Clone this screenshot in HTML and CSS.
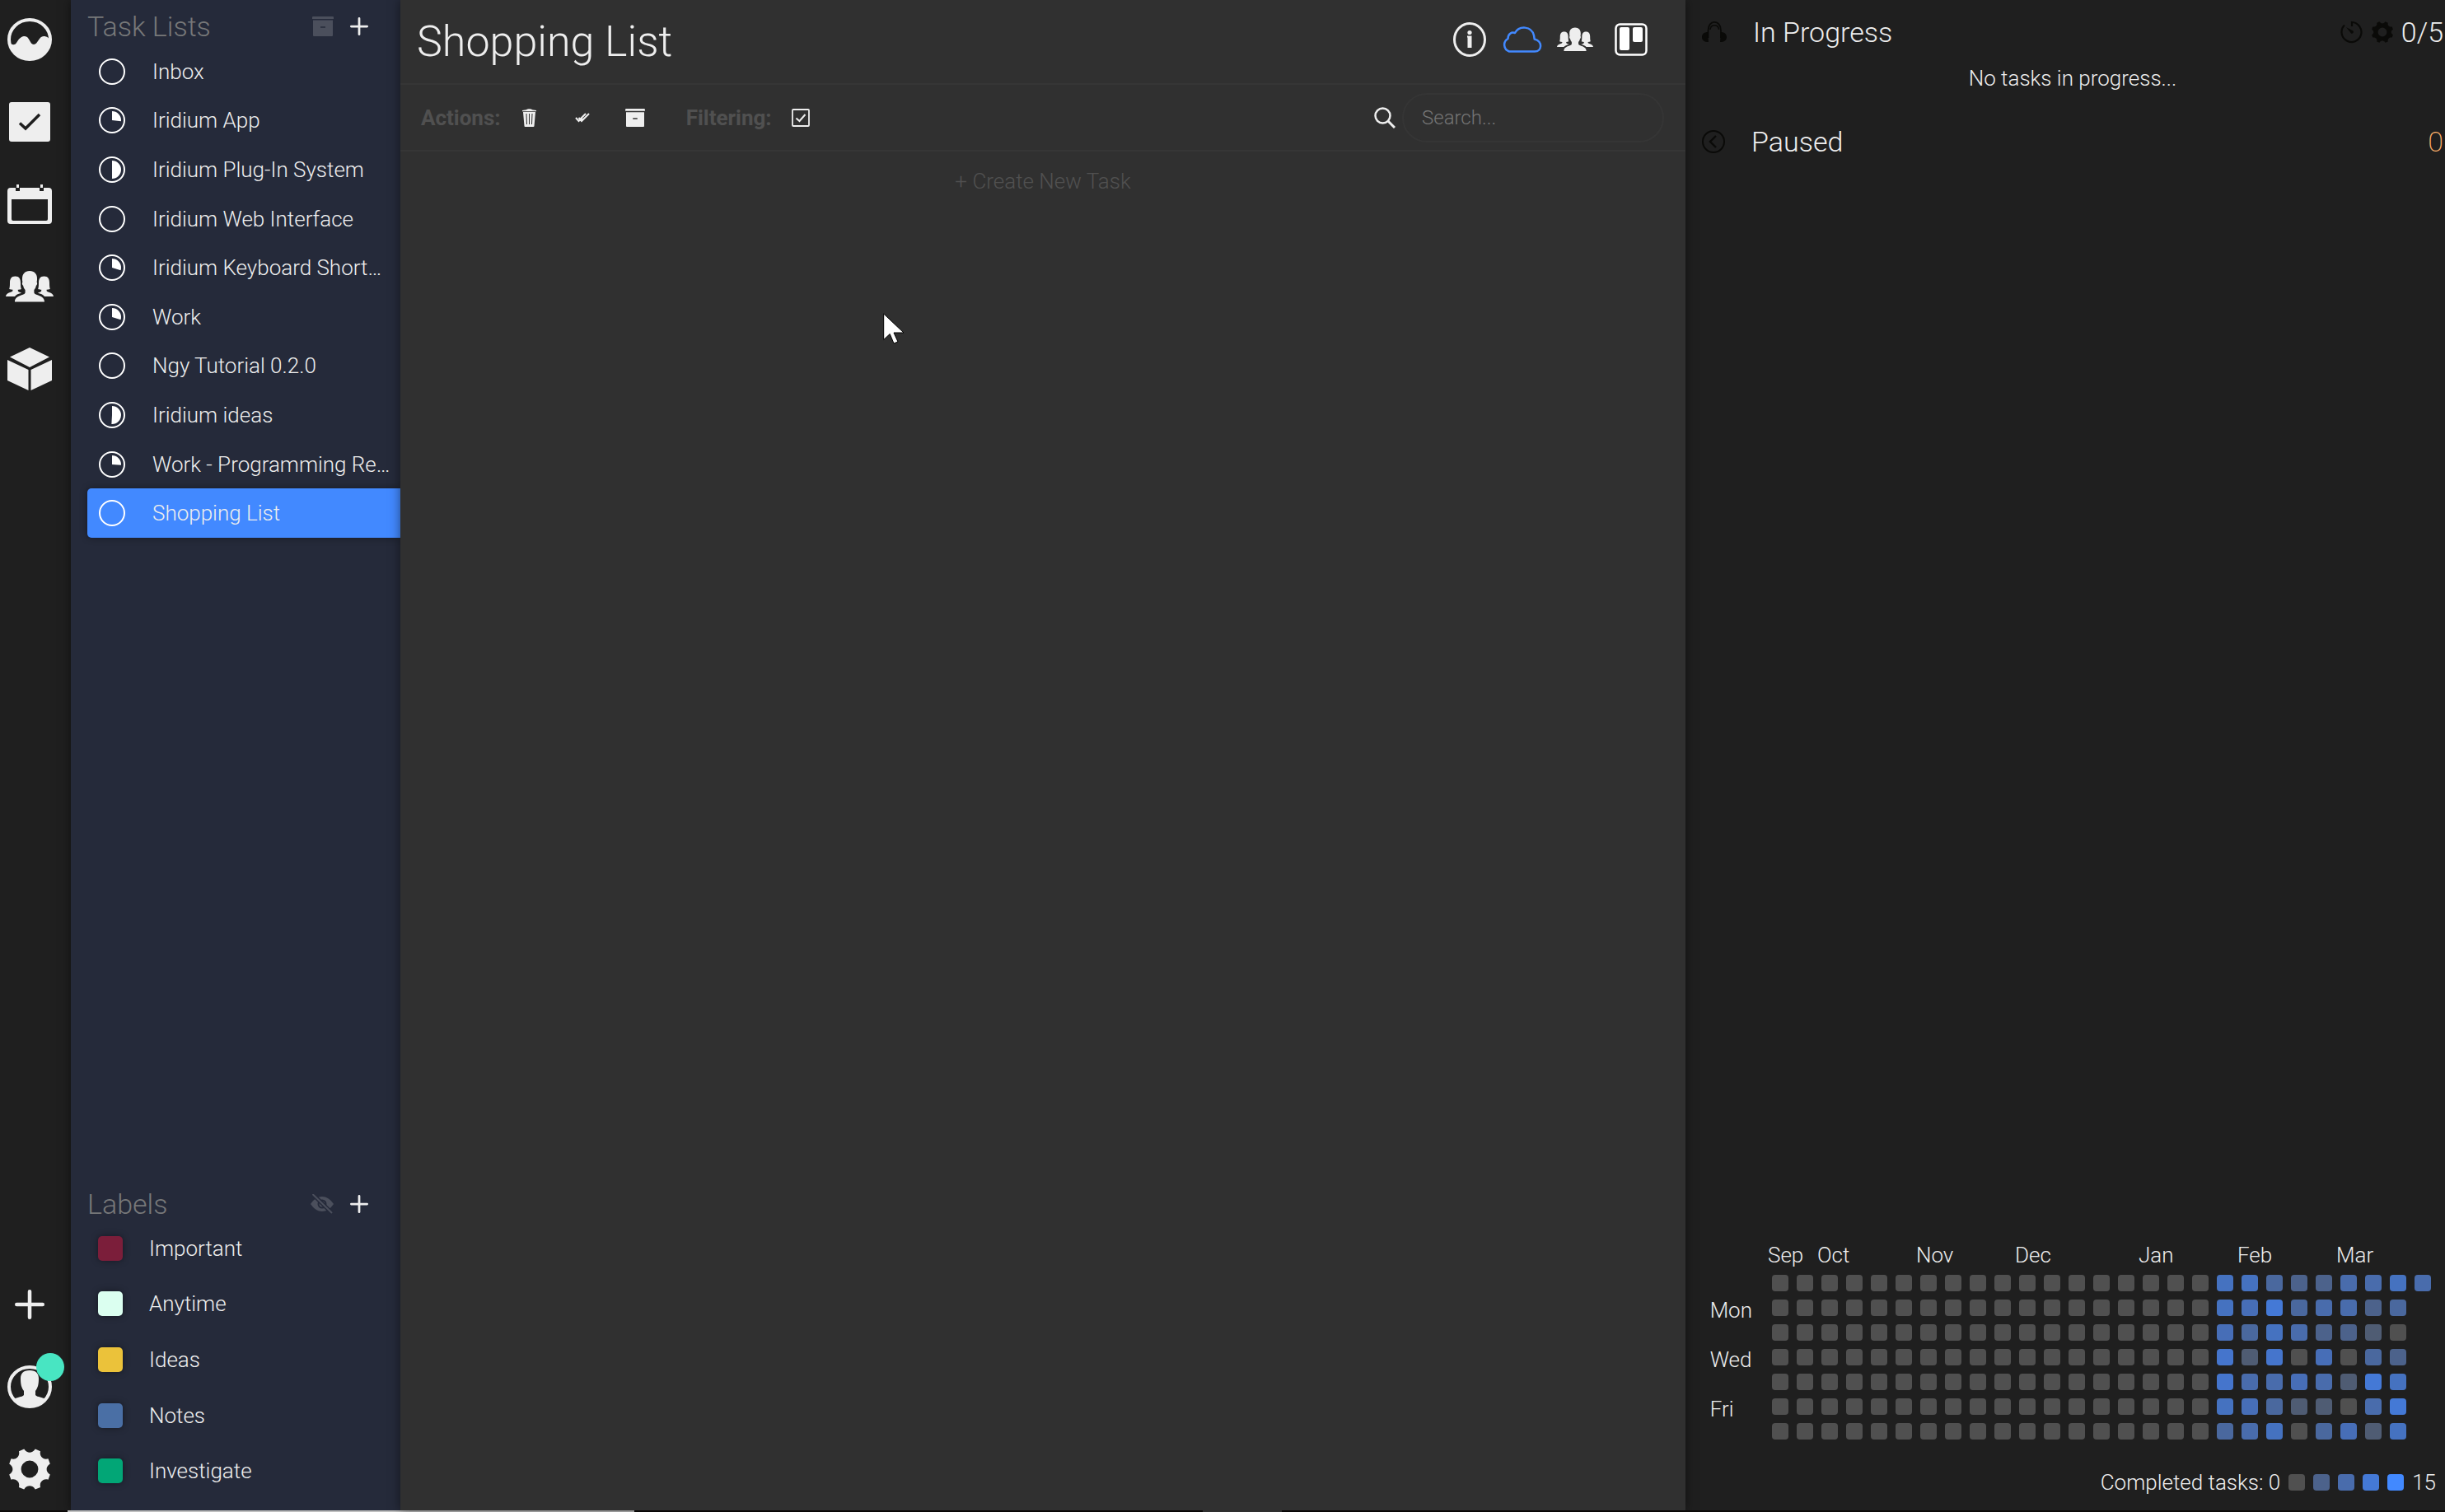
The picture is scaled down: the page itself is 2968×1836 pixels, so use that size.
FILE: index.html
```html
<!DOCTYPE html>
<html lang="en">
<head>
<meta charset="utf-8">
<meta name="viewport" content="width=device-width, initial-scale=1">
<title>Shopping List</title>
<link rel="stylesheet" href="styles.css">
</head>
<body>
<svg class="sprite" aria-hidden="true">
  <symbol id="i-people" viewBox="0 0 58 38">
    <path d="M29 0c6 0 9 4 9 9 0 2 0 3-.4 4.400c1 1 .6 3.600-.8 4.600-.4 2.600-1.400 3.800-2.400 5v3.400c1 3.600 12.600 2.600 12.600 11.100H11c0-8.500 11.600-7.500 12.600-11.100V23c-1-1.200-2-2.400-2.400-5-1.400-1-1.800-3.600-.8-4.600C20 12 20 11 20 9c0-5 3-9 9-9z"/>
    <path d="M11.500 6.500c5 0 6.500 3.500 6.500 8 0 4 .3 6 .8 7.500-1 .6-2.600.8-4 .8v1.400c.8 1.400 2.600 1.800 4.400 2.600-3.600 1-6.600 1.800-8.200 4.200H0c.4-5 7-4.600 8.400-6.800v-1.400c-1.600 0-3-.2-4.200-.8.5-1.500.8-3.500.8-7.500 0-4.500 1.500-8 6.500-8z"/>
    <path d="M46.500 6.500c-5 0-6.500 3.500-6.500 8 0 4-.3 6-.8 7.500 1 .6 2.600.8 4 .8v1.400c-.8 1.400-2.600 1.800-4.400 2.600 3.600 1 6.600 1.800 8.200 4.200H58c-.4-5-7-4.600-8.400-6.800v-1.400c1.600 0 3-.2 4.200-.8-.5-1.500-.8-3.500-.8-7.500 0-4.500-1.500-8-6.500-8z"/>
  </symbol>
  <symbol id="i-gear" viewBox="0 0 48 48">
    <path fill-rule="evenodd" d="M17.500 0.500c2 3.200 4.300 4 6.500 4s4.500-.8 6.500-4l6 2.500c-.8 3.700.3 5.700 1.900 7.200s3.600 2.500 7.200 1.600l2.200 6c-3.100 2-4 4-4 6.200s.9 4.200 4 6.200l-2.200 6c-3.600-.9-5.600.1-7.200 1.600s-2.700 3.500-1.900 7.200l-6 2.500c-2-3.200-4.300-4-6.500-4s-4.500.8-6.500 4l-6-2.500c.8-3.700-.3-5.700-1.900-7.200s-3.600-2.500-7.200-1.600l-2.200-6c3.100-2 4-4 4-6.200s-.9-4.200-4-6.200l2.200-6c3.600.9 5.600-.1 7.200-1.600s2.700-3.500 1.900-7.200zM24 14a10 10 0 1 0 0 20 10 10 0 0 0 0-20z"/>
  </symbol>
  <symbol id="i-plus" viewBox="0 0 32 32">
    <path d="M16 2v28M2 16h28" fill="none" stroke="currentColor" stroke-width="4" stroke-linecap="round"/>
  </symbol>
  <symbol id="i-archive" viewBox="0 0 26 24">
    <path d="M1 0h24a1 1 0 0 1 1 1v2H0V1a1 1 0 0 1 1-1z"/>
    <path fill-rule="evenodd" d="M1 4.500h24V23a1 1 0 0 1-1 1H2a1 1 0 0 1-1-1zM10 12.200v1.600h6v-1.600z"/>
  </symbol>
</svg>

<div class="app">
  <nav class="rail" aria-label="Main">
    <div class="rail-group">
      <button class="icon-btn" aria-label="Dashboard">
        <svg width="54" height="52" viewBox="0 0 54 52"><ellipse cx="27" cy="26" rx="25" ry="24" fill="none" stroke="currentColor" stroke-width="4"/><path d="M3 30c3 3 6 3 8 0 4-7 7-8 10-8 6 0 6 10 11 10s6-10 12-10c4 0 7 2 7 6 0 12-11 22-24 22S3 42 3 30z"/></svg>
      </button>
      <button class="icon-btn" aria-label="Tasks">
        <svg width="50" height="48" viewBox="0 0 50 48"><rect x="0" y="0" width="50" height="48" rx="3"/><path d="M13 25.500l7 6.500 17-17" fill="none" stroke="#1f1f1f" stroke-width="3.500"/></svg>
      </button>
      <button class="icon-btn" aria-label="Calendar">
        <svg width="54" height="48" viewBox="0 0 54 48"><path fill-rule="evenodd" d="M4 4h6v4h5V4h24v4h5V4h6a4 4 0 0 1 4 4v36a4 4 0 0 1-4 4H4a4 4 0 0 1-4-4V8a4 4 0 0 1 4-4zM5 18v24a2 2 0 0 0 2 2h40a2 2 0 0 0 2-2V18z"/><path d="M11 0h3v4h-3zM40 0h3v4h-3z"/></svg>
      </button>
      <button class="icon-btn" aria-label="Team">
        <svg width="58" height="38"><use href="#i-people"/></svg>
      </button>
      <button class="icon-btn" aria-label="Plugins">
        <svg width="54" height="52" viewBox="0 0 54 52"><path d="M27 0l24 11.500L27 24 3 11.500zM0 15l25.500 12v25L0 40zM54 15L28.500 27v25L54 40z"/></svg>
      </button>
    </div>
    <div class="rail-group">
      <button class="icon-btn" aria-label="Add">
        <svg width="36" height="36"><use href="#i-plus"/></svg>
      </button>
      <button class="icon-btn account" aria-label="Account">
        <svg width="54" height="52" viewBox="0 0 54 52"><ellipse cx="27" cy="26" rx="25" ry="24" fill="none" stroke="currentColor" stroke-width="4"/><path d="M27 6c8 0 11 4 11 10 0 7-1 11-4 15v5c3 3 8 2 12 5-5 6-11 9-19 9S13 47 8 41c4-3 9-2 12-5v-5c-3-4-4-8-4-15 0-6 3-10 11-10z"/></svg>
        <span class="badge"></span>
      </button>
      <button class="icon-btn" aria-label="Settings">
        <svg width="50" height="50"><use href="#i-gear"/></svg>
      </button>
    </div>
  </nav>

  <aside class="sidebar">
    <section>
      <header class="side-head">
        <h2>Task Lists</h2>
        <button class="icon-btn dim" aria-label="Archived lists"><svg width="26" height="24"><use href="#i-archive"/></svg></button>
        <button class="icon-btn" aria-label="New list"><svg width="22" height="22"><use href="#i-plus"/></svg></button>
      </header>
      <ul class="lists">
        <li><a href="#"><svg class="wheel" viewBox="0 0 32 32"><circle class="ring" cx="16" cy="16" r="15"/></svg>Inbox</a></li>
        <li><a href="#"><svg class="wheel" viewBox="0 0 32 32"><circle class="ring" cx="16" cy="16" r="15"/><circle class="pie" cx="16" cy="16" r="5.500" pathLength="100" stroke-dasharray="27 100"/></svg>Iridium App</a></li>
        <li><a href="#"><svg class="wheel" viewBox="0 0 32 32"><circle class="ring" cx="16" cy="16" r="15"/><circle class="pie" cx="16" cy="16" r="5.500" pathLength="100" stroke-dasharray="50 100"/></svg>Iridium Plug-In System</a></li>
        <li><a href="#"><svg class="wheel" viewBox="0 0 32 32"><circle class="ring" cx="16" cy="16" r="15"/></svg>Iridium Web Interface</a></li>
        <li><a href="#"><svg class="wheel" viewBox="0 0 32 32"><circle class="ring" cx="16" cy="16" r="15"/><circle class="pie" cx="16" cy="16" r="5.500" pathLength="100" stroke-dasharray="30 100"/></svg>Iridium Keyboard Short…</a></li>
        <li><a href="#"><svg class="wheel" viewBox="0 0 32 32"><circle class="ring" cx="16" cy="16" r="15"/><circle class="pie" cx="16" cy="16" r="5.500" pathLength="100" stroke-dasharray="30 100"/></svg>Work</a></li>
        <li><a href="#"><svg class="wheel" viewBox="0 0 32 32"><circle class="ring" cx="16" cy="16" r="15"/></svg>Ngy Tutorial 0.2.0</a></li>
        <li><a href="#"><svg class="wheel" viewBox="0 0 32 32"><circle class="ring" cx="16" cy="16" r="15"/><circle class="pie" cx="16" cy="16" r="5.500" pathLength="100" stroke-dasharray="51 100"/></svg>Iridium ideas</a></li>
        <li><a href="#"><svg class="wheel" viewBox="0 0 32 32"><circle class="ring" cx="16" cy="16" r="15"/><circle class="pie" cx="16" cy="16" r="5.500" pathLength="100" stroke-dasharray="26 100"/></svg>Work - Programming Re…</a></li>
        <li><a href="#" class="active" aria-current="page"><svg class="wheel" viewBox="0 0 32 32"><circle class="ring" cx="16" cy="16" r="15"/></svg>Shopping List</a></li>
      </ul>
    </section>
    <section>
      <header class="side-head compact">
        <h2>Labels</h2>
        <button class="icon-btn dim" aria-label="Hide labels">
          <svg width="28" height="24" viewBox="0 0 28 24"><path fill-rule="evenodd" d="M0 12C4 6 9 3 14 3s10 3 14 9c-4 6-9 9-14 9S4 18 0 12zM14 6.500a5.500 5.500 0 1 0 0 11 5.500 5.500 0 0 0 0-11z"/><circle cx="14" cy="12" r="3.500"/><path d="M2.500 0L26 23" fill="none" stroke="#252a3a" stroke-width="5"/><path d="M2.500 0L26 23" fill="none" stroke="currentColor" stroke-width="2"/></svg>
        </button>
        <button class="icon-btn" aria-label="New label"><svg width="22" height="22"><use href="#i-plus"/></svg></button>
      </header>
      <ul class="labels">
        <li><span class="swatch important"></span>Important</li>
        <li><span class="swatch anytime"></span>Anytime</li>
        <li><span class="swatch ideas"></span>Ideas</li>
        <li><span class="swatch notes"></span>Notes</li>
        <li><span class="swatch investigate"></span>Investigate</li>
      </ul>
    </section>
  </aside>

  <main class="main">
    <header class="title-bar">
      <h1>Shopping List</h1>
      <button class="icon-btn" aria-label="Info">
        <svg width="40" height="42" viewBox="0 0 40 42"><ellipse cx="20" cy="21" rx="18.500" ry="19.500" fill="none" stroke="currentColor" stroke-width="3"/><circle cx="20" cy="12.500" r="2.600"/><path d="M17 16.500h5.500V31h-5V18.500H17z"/></svg>
      </button>
      <button class="icon-btn cloud" aria-label="Sync">
        <svg width="50" height="32" viewBox="0 0 50 32"><path d="M10 30.500a8.500 8.500 0 0 1-1.500-15.500c0-6 4.500-8.500 8.500-7C22-1 37-1 40 11l.7 4.500C51 18 50 30.500 41 30.500z" fill="none" stroke="currentColor" stroke-width="2.500" stroke-linejoin="round"/></svg>
      </button>
      <button class="icon-btn" aria-label="Share">
        <svg width="44" height="30"><use href="#i-people"/></svg>
      </button>
      <button class="icon-btn board" aria-label="Board view">
        <svg width="40" height="40" viewBox="0 0 40 40"><rect x="1.500" y="1.500" width="37" height="37" rx="5" fill="none" stroke="currentColor" stroke-width="2.500"/><rect x="6" y="5" width="12" height="28" rx="2"/><rect x="22" y="5" width="12" height="18" rx="2"/></svg>
      </button>
    </header>

    <div class="tool-bar">
      <span class="tool-label">Actions:</span>
      <button class="icon-btn tool" aria-label="Delete">
        <svg width="17" height="22" viewBox="0 0 17 22"><path d="M0 2l5-.8C6 0 11 0 12 1.200L17 2v1.200H0z"/><path d="M1 4h15l-1.500 17a1 1 0 0 1-1 1h-10a1 1 0 0 1-1-1z"/><path d="M5 6l.5 13M8.500 6v13M12 6l-.5 13" fill="none" stroke="#303030" stroke-width="1"/></svg>
      </button>
      <button class="icon-btn tool" aria-label="Complete all">
        <svg width="18" height="12" viewBox="0 0 18 12"><path d="M1 6l3.500 4 2-2M4.500 6L8 10l3-3M5.500 8.500L13 1M8 10l9-9M7 6l2 2" fill="none" stroke="currentColor" stroke-width="2"/></svg>
      </button>
      <button class="icon-btn tool" aria-label="Archive"><svg width="24" height="22"><use href="#i-archive"/></svg></button>
      <span class="tool-label filter">Filtering:</span>
      <button class="icon-btn tool" aria-label="Show completed">
        <svg width="22" height="22" viewBox="0 0 22 22"><rect x="1" y="1" width="20" height="20" rx="1" fill="none" stroke="currentColor" stroke-width="1.800"/><path d="M5.500 11.500l4 3.500 7-8" fill="none" stroke="currentColor" stroke-width="2"/></svg>
      </button>
      <label class="search">
        <svg width="26" height="26" viewBox="0 0 26 26" aria-label="Search"><circle cx="10.500" cy="10.500" r="9" fill="none" stroke="currentColor" stroke-width="2.500"/><path d="M17 17l8 8" stroke="currentColor" stroke-width="3"/></svg>
        <input type="text" placeholder="Search...">
      </label>
    </div>

    <button class="create">+ Create New Task</button>
    <svg class="cursor" width="26" height="38" viewBox="0 0 26 38" aria-hidden="true"><path d="M.7 1v31.500l7.500-7L13 37l5-2-5-11h12z" fill="#fff" stroke="#000" stroke-width="1"/></svg>
  </main>

  <aside class="progress">
    <section class="status">
      <svg class="dark" width="30" height="26" viewBox="0 0 30 26"><path d="M8 25c-5 0-8-2-8-6s3-6 7-6zM22 25c5 0 8-2 8-6s-3-6-7-6z"/><path d="M7.500 20v-9C7.500-2.500 23 -2.500 23 11v9" fill="none" stroke="currentColor" stroke-width="1.800"/><path d="M10 10c.5-7 10-7 10.500 0" fill="none" stroke="currentColor" stroke-width="1.500"/></svg>
      <h2>In Progress</h2>
      <div class="count">
        <svg class="dark" width="28" height="28" viewBox="0 0 28 28"><path d="M14 7V2a12 12 0 1 1-9 3.500" fill="none" stroke="currentColor" stroke-width="2.200"/><path d="M7 8l8.500 4.500a2 2 0 0 1-2.500 3z"/></svg>
        <svg class="dark" width="26" height="26"><use href="#i-gear"/></svg>
        <span>0/5</span>
      </div>
    </section>
    <p class="empty">No tasks in progress...</p>
    <section class="status">
      <svg class="dark" width="28" height="28" viewBox="0 0 28 28"><circle cx="14" cy="14" r="13" fill="none" stroke="currentColor" stroke-width="2"/><path d="M17 7l-7 7 7 7" fill="none" stroke="currentColor" stroke-width="2.400"/></svg>
      <h2>Paused</h2>
      <div class="count paused">0</div>
    </section>

    <section class="activity" aria-label="Completed tasks per day">
      <div class="months">
        <span class="m-sep">Sep</span><span class="m-oct">Oct</span><span class="m-nov">Nov</span><span class="m-dec">Dec</span><span class="m-jan">Jan</span><span class="m-feb">Feb</span><span class="m-mar">Mar</span>
      </div>
      <div class="week-names"><span>Mon</span><span>Wed</span><span>Fri</span></div>
      <div class="cells" id="cells"></div>
      <div class="legend">
        <span>Completed tasks: 0</span>
        <i class="cell"></i><i class="cell l2"></i><i class="cell l4"></i><i class="cell l8"></i><i class="cell l9"></i>
        <span>15</span>
      </div>
    </section>
  </aside>
</div>
<div class="dock"><span class="dock-main"></span><span class="dock-tab"></span></div>
<script src="activity.js"></script>
</body>
</html>
```
FILE: styles.css
```css
* {
  box-sizing: border-box;
}

body {
  margin: 0;
  min-height: 100vh;
  display: flex;
  flex-direction: column;
  background: #1f1f1f;
  color: #eee;
  font-family: Roboto, "Liberation Sans", sans-serif;
  font-size: 26px;
  font-weight: 300;
  line-height: 32px;
}

h1,
h2,
p,
ul {
  margin: 0;
  padding: 0;
}

ul {
  list-style: none;
}

svg {
  display: block;
  flex: none;
  fill: currentColor;
}

.sprite {
  position: absolute;
  width: 0;
  height: 0;
}

.icon-btn {
  display: flex;
  align-items: center;
  justify-content: center;
  margin: 0;
  padding: 0;
  border: 0;
  background: none;
  color: #eee;
}

.app {
  flex: 1;
  display: grid;
  grid-template-columns: 86px 400px minmax(0, 1fr) 922px;
}

/* Icon rail */

.rail {
  display: flex;
  flex-direction: column;
  justify-content: space-between;
  padding: 22px 14px 24px 0;
}

.rail-group {
  display: flex;
  flex-direction: column;
  gap: 48px;
}

.rail .icon-btn {
  height: 52px;
}

.account {
  position: relative;
}

.badge {
  position: absolute;
  top: -15px;
  right: -6px;
  width: 34px;
  height: 34px;
  border-radius: 50%;
  background: #48e5c2;
}

/* Lists and labels */

.sidebar {
  display: flex;
  flex-direction: column;
  justify-content: space-between;
  padding: 7px 0 14px 20px;
  background: #252a3a;
  box-shadow: 0 0 12px rgba(0, 0, 0, 0.5);
}

.side-head {
  display: flex;
  align-items: center;
  gap: 20px;
  height: 50px;
  padding-right: 39px;
}

.side-head.compact {
  height: 40px;
}

.side-head h2 {
  flex: 1;
  color: #777879;
  font-size: 34px;
  font-weight: 300;
  line-height: 40px;
}

.dim {
  color: #4b4f5c;
}

.lists {
  display: grid;
  grid-template-rows: repeat(10, 1fr);
  height: 596px;
}

.lists a {
  display: flex;
  align-items: center;
  gap: 33px;
  height: 100%;
  padding-left: 14px;
  border-radius: 5px 0 0 5px;
  color: inherit;
  text-decoration: none;
  white-space: nowrap;
}

.lists .active {
  background: #4289ff;
  box-shadow: 0 0 8px rgba(0, 0, 0, 0.4);
}

.wheel {
  width: 32px;
  height: 32px;
  fill: none;
  stroke: #fff;
}

.ring {
  stroke-width: 2;
}

.pie {
  stroke-width: 11;
  transform: rotate(-90deg);
  transform-origin: center;
}

.labels {
  display: grid;
  grid-template-rows: repeat(5, 1fr);
  height: 338px;
}

.labels li {
  display: flex;
  align-items: center;
  gap: 32px;
  padding-left: 13px;
}

.swatch {
  width: 30px;
  height: 30px;
  border-radius: 5px;
  box-shadow: 0 0 8px rgba(0, 0, 0, 0.4);
}

.important { background: #7b1e3a; }
.anytime { background: #dbfff0; }
.ideas { background: #ebc23a; }
.notes { background: #4a6fa5; }
.investigate { background: #02a676; }

/* Task list */

.main {
  position: relative;
  z-index: 1;
  background: #303030;
  box-shadow: 0 0 12px rgba(0, 0, 0, 0.5);
}

.title-bar {
  display: flex;
  align-items: center;
  height: 103px;
  padding: 0 46px 6px 20px;
  border-bottom: 2px solid #363636;
}

.title-bar h1 {
  flex: 1;
  padding-top: 6px;
  font-size: 52px;
  font-weight: 300;
  line-height: 60px;
}

.title-bar .icon-btn {
  margin-left: 18px;
}

.title-bar .cloud {
  color: #4289ff;
}

.title-bar .board {
  margin-left: 26px;
  color: #fff;
}

.tool-bar {
  display: flex;
  align-items: center;
  height: 81px;
  padding: 0 26px 0 25px;
  border-bottom: 2px solid #363636;
}

.tool-label {
  color: #505050;
  font-weight: 700;
}

.tool {
  width: 24px;
  margin-left: 40px;
}

.tool-label + .tool {
  margin-left: 23px;
}

.filter {
  margin-left: 50px;
}

.search {
  display: flex;
  align-items: center;
  gap: 8px;
  margin-left: auto;
}

.search input {
  width: 318px;
  height: 60px;
  padding: 0 22px;
  border: 2px solid #353535;
  border-radius: 30px;
  background: transparent;
  color: #eee;
  font: inherit;
  font-size: 24px;
}

.search input::placeholder {
  color: #757575;
  opacity: 1;
}

.create {
  display: block;
  width: 100%;
  padding: 20px 0;
  border: 0;
  background: none;
  color: #505050;
  font: inherit;
}

.cursor {
  position: absolute;
  left: 586px;
  top: 380px;
}

/* Progress panel */

.progress {
  display: flex;
  flex-direction: column;
  padding: 19px 2px 18px 20px;
}

.status {
  display: flex;
  align-items: center;
  height: 40px;
}

.status h2 {
  margin-left: 32px;
  font-size: 34px;
  font-weight: 300;
  line-height: 40px;
}

.dark {
  color: #0a0a08;
}

.count {
  display: flex;
  align-items: center;
  gap: 10px;
  margin-left: auto;
  font-size: 34px;
  line-height: 40px;
}

.paused {
  color: #ffb26b;
  font-weight: 200;
}

.empty {
  padding: 20px 0 41px;
  text-align: center;
}

.activity {
  display: grid;
  grid-template-columns: auto 800px;
  column-gap: 24px;
  justify-content: end;
  margin-top: auto;
  padding-right: 15px;
}

.months {
  grid-column: 2;
  display: grid;
  grid-template-columns: repeat(27, 20px);
  column-gap: 10px;
  height: 40px;
  margin-left: -5px;
}

.months span {
  grid-row: 1;
  width: 60px;
}

.m-sep { grid-column: 1; }
.m-oct { grid-column: 3; }
.m-nov { grid-column: 7; }
.m-dec { grid-column: 11; }
.m-jan { grid-column: 16; }
.m-feb { grid-column: 20; }
.m-mar { grid-column: 24; }

.week-names {
  display: flex;
  flex-direction: column;
  gap: 28px;
  padding-top: 27px;
}

.cells {
  display: grid;
  grid-auto-flow: column;
  grid-template-rows: repeat(7, 20px);
  grid-auto-columns: 20px;
  gap: 10px;
}

.cell {
  width: 20px;
  height: 20px;
  border-radius: 4px;
  background: #505050;
}

.l1 { background: #4f5c73; }
.l2 { background: #4c628b; }
.l3 { background: #4a689e; }
.l4 { background: #496cac; }
.l5 { background: #476eb7; }
.l6 { background: #4572c0; }
.l7 { background: #4575cc; }
.l8 { background: #4479d6; }
.l9 { background: #4289ff; }

.legend {
  grid-column: 1 / -1;
  display: flex;
  align-items: center;
  justify-content: flex-end;
  gap: 10px;
  margin-top: 36px;
  margin-right: -6px;
}

/* Taskbar edge */

.dock {
  display: flex;
  height: 2px;
  padding-left: 82px;
  background: #0c0a08;
}

.dock-main {
  width: 688px;
  background: #c0c0c0;
}

.dock-tab {
  width: 96px;
  margin-left: 690px;
  background: #3c3c3c;
}
```
FILE: activity.js
```js
// One string per week, Sunday first; each digit is the shade level of a day.
const idleWeeks = Array(18).fill("0000000");
const weeks = idleWeeks.concat([
  "6657763",
  "6531454",
  "3867436",
  "2340510",
  "2425413",
  "4420105",
  "4213841",
  "6302686",
  "4"
]);

const cells = document.getElementById("cells");
for (const level of weeks.join("")) {
  const cell = document.createElement("i");
  cell.className = "cell l" + level;
  cells.append(cell);
}
```
